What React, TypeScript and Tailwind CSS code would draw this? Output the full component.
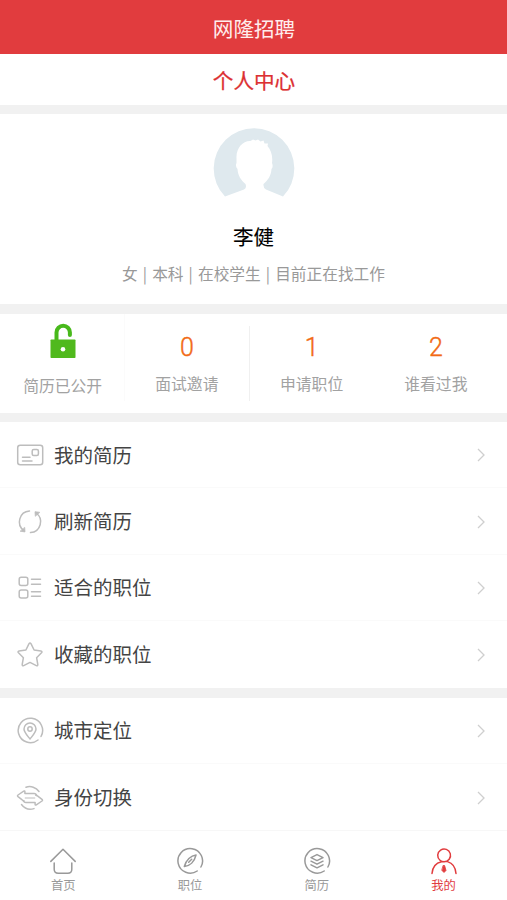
import { memo } from "react";
import type { ReactNode } from "react";

const stats = [
  { value: "0", label: "面试邀请" },
  { value: "1", label: "申请职位" },
  { value: "2", label: "谁看过我" },
];

function Icon({ children }: { children: ReactNode }) {
  return (
    <svg
      viewBox="0 0 28 28"
      className="h-7 w-7"
      fill="none"
      stroke="currentColor"
      strokeWidth="1.5"
      strokeLinecap="round"
      strokeLinejoin="round"
    >
      {children}
    </svg>
  );
}

const resumeItems = [
  {
    label: "我的简历",
    icon: (
      <Icon>
        <rect x="1.7" y="4.2" width="25" height="19.6" rx="2.5" />
        <rect x="16.2" y="8.5" width="6.2" height="6" rx="1.5" />
        <path d="M6.5 16.2h7.5M6.5 20h9.5" />
      </Icon>
    ),
  },
  {
    label: "刷新简历",
    icon: (
      <Icon>
        <path d="M13.5 3A10.8 10.8 0 0 0 8 22.6M14.500 24.600A10.800 10.800 0 0 0 20 5" />
        <path d="M4.500 23.300l4.500.6-.3-4.200zM23.500 4.300l-4.500-.6.3 4.200z" fill="currentColor" strokeWidth="0.800" />
      </Icon>
    ),
  },
  {
    label: "适合的职位",
    icon: (
      <Icon>
        <rect x="3.2" y="3.2" width="8.6" height="8.2" rx="2" />
        <rect x="3.2" y="15.9" width="8.6" height="8.2" rx="2" />
        <path d="M15.5 5.2h9M15.5 10.2h9M15.5 17.7h9M15.5 22.2h9" />
      </Icon>
    ),
  },
  {
    label: "收藏的职位",
    icon: (
      <Icon>
        <path d="M12.9 2.9q1.1-1.6 2.2 0l3 6.1 6.8 1q1.8.4.6 1.8l-4.9 4.9 1.2 6.8q.1 1.7-1.5 1.1L14 21.4l-6.3 3.200q-1.600.6-1.500-1.100l1.200-6.800-4.900-4.900q-1.200-1.400.6-1.800l6.800-1z" />
      </Icon>
    ),
  },
];

const accountItems = [
  {
    label: "城市定位",
    icon: (
      <Icon>
        <path d="M25 19.5A12.2 12.2 0 1 0 22 23" />
        <path d="M14 22c-3-3.800-6-6.800-6-10a6 6 0 0 1 12 0c0 3.200-3 6.200-6 10z" />
        <circle cx="14" cy="12" r="2.200" />
      </Icon>
    ),
  },
  {
    label: "身份切换",
    icon: (
      <Icon>
        <path d="M10 3.200A11.500 11.500 0 0 1 23 7.500M18 24.600A11.500 11.500 0 0 1 5.500 20.500" />
        <path d="M8.900 9.600V7.700q0-1.300-1.200-.5L2 11q-1 .8 0 1.600l4.200 3.200q1 .7 1.800 1.200M8.900 9.600h9.300q1.600 0 2.400 1.600" />
        <path d="M19.100 18.400v1.900q0 1.300 1.200.5L26 17q1-.8 0-1.600l-4.200-3.200q-1.200-.8-2.200-1.200M19.100 18.400H9.800q-1.600 0-2.400-1.600" />
        <path d="M9.200 14h9.600" strokeWidth="1" />
      </Icon>
    ),
  },
];

const tabs = [
  {
    label: "首页",
    active: false,
    icon: (
      <Icon>
        <path d="M1.8 14.4L14 2.2l12.200 12.200M5.200 16v6.200q0 4 4 4h9.600q4 0 4-4V16" />
      </Icon>
    ),
  },
  {
    label: "职位",
    active: false,
    icon: (
      <Icon>
        <path d="M24.9 20A12.3 12.3 0 1 0 21.2 24" />
        <path d="M20 8C15 8.5 10 13 8.3 19.5 14 19 18.5 14.5 20 8zM15.7 12.3l-3 3" />
      </Icon>
    ),
  },
  {
    label: "简历",
    active: false,
    icon: (
      <Icon>
        <path d="M24.9 20A12.3 12.3 0 1 0 21.2 24" />
        <path d="M14 7.6l6 3-6 3-6-3zM8 14.2l6 3 6-3M8 17.8l6 3 6-3" />
      </Icon>
    ),
  },
  {
    label: "我的",
    active: true,
    icon: (
      <Icon>
        <path d="M17.500 14.600C22.500 16 25.500 20 26 26.500M2 26.500C2.500 20.500 6 16 11.500 14.800H14A6.400 6.400 0 1 0 10 13.300Q11.500 14.600 14 14.800" />
        <path d="M13.400 18.500h1.200l1.400 5-2 2-2-2z" fill="currentColor" strokeWidth="0.800" />
      </Icon>
    ),
  },
];

function Avatar() {
  return (
    <svg viewBox="0 0 82 82" className="h-[82px] w-[82px]">
      <path
        d="M12 68.5A40.3 40.3 0 1 1 70 68.5L53 61.5Q50 60 50.5 56C55 52 58 48 58.500 41Q60.500 39 59 35C60 28 58 22 54.500 18L55 15.500 51.500 15.500 50.500 12.500 47.500 13.500 45 11.500 42.500 12.500 40 11.500 37.500 13C30 12.500 23 20 23.500 30V35Q22 38 24.500 41C25 48 28 52 32.500 56Q34 60 31 61.500Z"
        fill="#dfe9ee"
      />
    </svg>
  );
}

function LockOpen() {
  return (
    <svg viewBox="0 0 26 36" className="h-9 w-[26px]">
      <path
        d="M6.5 18V9.5a6.7 6.7 0 0 1 13.4 0v2.5"
        fill="none"
        stroke="#48b91b"
        strokeWidth="4"
        strokeLinecap="round"
      />
      <rect x="0.5" y="16.5" width="25" height="18.5" rx="0.8" fill="#50b91d" />
      <circle cx="13" cy="26.2" r="2.3" fill="white" />
    </svg>
  );
}

function MenuList({ items }: { items: { label: string; icon: ReactNode }[] }) {
  return (
    <ul>
      {items.map((item) => (
        <li key={item.label} className="h-[66.4px] border-b border-[#fafafa] last:border-0">
          <a className="flex h-full items-center pr-5 pl-4 text-[19.5px] text-[#444]">
            <span className="mr-2.5 pt-px text-[#bdbdbd]">{item.icon}</span>
            <span className="flex-1 pb-px">{item.label}</span>
            <svg viewBox="0 0 12 16" className="mt-px h-4 w-3" fill="none" stroke="#cfcfcf" strokeWidth="1.3">
              <path d="M3 2l6 6-6 6" />
            </svg>
          </a>
        </li>
      ))}
    </ul>
  );
}

const MenuSection = memo(MenuList);

export default function App() {
  return (
    <div className="flex h-[900px] w-full flex-col overflow-hidden bg-[#f1f1f1] font-['Noto_Sans_CJK_SC',sans-serif]">
      <header className="flex h-[54px] shrink-0 items-center justify-center bg-[#e13c3e] pt-0.5 pl-px text-[20.6px] text-[#ffeded]">
        网隆招聘
      </header>
      <h1 className="flex h-[51px] shrink-0 items-center justify-center bg-white pt-0.5 pl-px text-[20.6px] text-[#dc3032] [-webkit-text-stroke:0.25px]">
        个人中心
      </h1>

      <section className="mt-[9px] flex h-[190px] shrink-0 flex-col items-center bg-white pt-[14px]">
        <Avatar />
        <h2 className="mt-[11px] text-[20.5px] leading-[30px] text-black [-webkit-text-stroke:0.1px]">李健</h2>
        <p className="mt-[11px] text-[15.7px] leading-6 text-[#999] [word-spacing:1.6px]">
          女 | 本科 | 在校学生 | 目前正在找工作
        </p>
      </section>

      <section className="mt-2.5 grid h-[99px] shrink-0 grid-cols-4 bg-white pr-[9px] pl-px text-center text-[15.8px] text-[#a2a2a2]">
        <div className="mb-3 flex flex-col items-center border-r border-[#fbfbfb] pt-[9px]">
          <LockOpen />
          <span className="mt-[15px] leading-6">简历已公开</span>
        </div>
        {stats.map((stat) => (
          <div
            key={stat.label}
            className="my-3 flex flex-col items-center border-[#f0f0f0] pt-[7px] nth-2:border-r"
          >
            <span className="font-[Roboto] text-[25px] leading-[30px] font-light text-[#f26a14] [-webkit-text-stroke:0.4px]">
              {stat.value}
            </span>
            <span className="mt-[9px] leading-6">{stat.label}</span>
          </div>
        ))}
      </section>

      <section className="mt-[9px] shrink-0 bg-white">
        <MenuSection items={resumeItems} />
      </section>
      <section className="mt-2.5 shrink-0 bg-white">
        <MenuSection items={accountItems} />
      </section>

      <nav className="grid flex-1 grid-cols-4 border-t border-[#f7f7f7] bg-white">
        {tabs.map((tab) => (
          <a
            key={tab.label}
            className={`flex flex-col items-center pt-4 text-[12.3px] leading-5 ${
              tab.active ? "text-[#e13c3e]" : "text-[#999]"
            }`}
          >
            {tab.icon}
            <span>{tab.label}</span>
          </a>
        ))}
      </nav>
    </div>
  );
}
